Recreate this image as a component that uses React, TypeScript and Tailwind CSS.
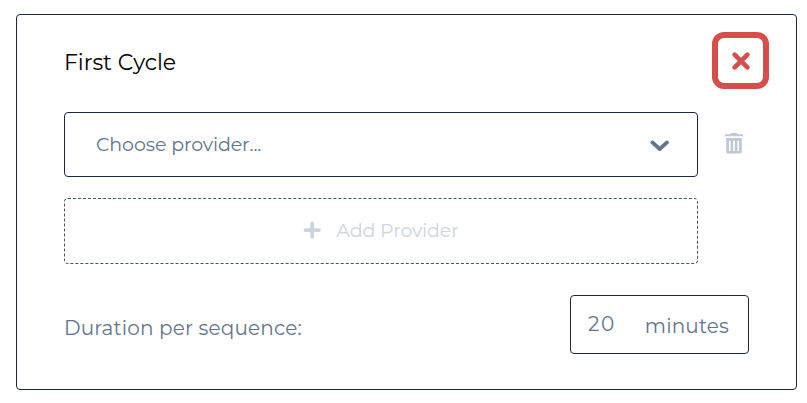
import React from 'react';

function StrokeIcon({ d, className, width }: { d: string; className: string; width: number }) {
  return (
    <svg viewBox="0 0 20 20" className={className} fill="none" stroke="currentColor" strokeWidth={width} strokeLinecap="round" strokeLinejoin="round" aria-hidden="true">
      <path d={d} />
    </svg>
  );
}

function TrashIcon() {
  return (
    <svg viewBox="0 0 18 21" className="h-[21px] w-[18px]" fill="currentColor" aria-hidden="true">
      <path d="M0 1.9 Q0 1.3 .6 1.3 H5.2 L5.8 .4 Q6 0 6.6 0 H11.4 Q12 0 12.2 .4 L12.8 1.3 H17.4 Q18 1.3 18 1.9 V3.3 H0 Z" />
      <path fillRule="evenodd" d="M1.2 5 H16.8 V18.7 Q16.8 20.6 14.9 20.6 H3.1 Q1.2 20.6 1.2 18.7 Z M4 7.8 V17.9 H5.6 V7.8 Z M8.2 7.8 V17.9 H9.8 V7.8 Z M12.4 7.8 V17.9 H14 V7.8 Z" />
    </svg>
  );
}

export default function App() {
  return (
    <main className="h-[403px] w-[807px] bg-white pt-[14px] pl-4 font-['Montserrat','Inter',sans-serif] font-normal text-[#64748b]">
      <section className="h-[376px] w-[781px] rounded border border-[#1e293b] pl-[47px] pt-[17px]">
        <header className="flex h-[58px] w-[705px] items-start justify-between">
          <h2 className="pt-[17px] text-[22px] leading-7 tracking-[-0.06px] text-black">First Cycle</h2>
          <button aria-label="Remove cycle" className="flex size-[57px] items-center justify-center rounded-xl border-[6px] border-[#d64d4b] text-[#d64d4b]">
            <StrokeIcon className="size-5" width={4.6} d="M3.6 3.6 L16.4 16.4 M16.4 3.6 L3.6 16.4" />
          </button>
        </header>
        <div className="mt-[22px] flex items-center">
          <button className="flex h-[65px] w-[634px] items-center justify-between rounded border border-[#1e293b] pl-[31px] pr-[27px]">
            <span className="text-[19px] leading-6 tracking-[-0.1px]">Choose provider...</span>
            <StrokeIcon className="size-5" width={3.8} d="M2.4 7.4 L9.7 14 L17 7.4" />
          </button>
          <button aria-label="Delete provider" className="ml-[27px] pb-[2px] text-[#c1c8d3]">
            <TrashIcon />
          </button>
        </div>
        <button className="mt-[21px] flex h-[66px] w-[634px] items-center justify-center rounded border border-dashed border-[#475569] text-[#cbd5e1]">
          <StrokeIcon className="mr-[13px] mb-[2px] size-5" width={3.8} d="M9.2 3.4 V16.8 M2.4 10.1 H16" />
          <span className="text-[19px] leading-6 tracking-[-0.12px]">Add Provider</span>
        </button>
        <div className="mt-[31px] flex h-[59px] w-[685px] items-center justify-between">
          <span className="pt-[6px] text-[20px] leading-6 tracking-[0.15px]">Duration per sequence:</span>
          <div className="flex h-[59px] w-[179px] items-center justify-between rounded border border-[#1e293b] pl-[17px] pr-[19px]">
            <span className="pb-[2px] text-[20px] leading-6 tracking-[1.8px]">20</span>
            <span className="pt-[2px] text-[20px] leading-6 tracking-[0.15px]">minutes</span>
          </div>
        </div>
      </section>
    </main>
  );
}
